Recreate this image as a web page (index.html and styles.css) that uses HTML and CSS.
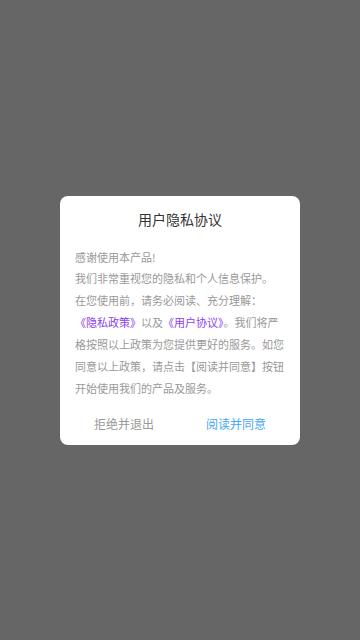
FILE: index.html
```html
<!DOCTYPE html>
<html lang="zh-CN">
<head>
<meta charset="utf-8">
<meta name="viewport" content="width=360, initial-scale=1">
<title>用户隐私协议</title>
<link rel="stylesheet" href="styles.css">
</head>
<body>
<div class="mask">
  <div class="dialog">
    <div class="title">用户隐私协议</div>
    <div class="content">
      <p>感谢使用本产品!</p>
      <p>我们非常重视您的隐私和个人信息保护。</p>
      <p>在您使用前，请务必阅读、充分理解：</p>
      <p><span class="link">《隐私政策》</span>以及<span class="link">《用户协议》</span>。我们将严格按照以上政策为您提供更好的服务。如您同意以上政策，请点击【阅读并同意】按钮开始使用我们的产品及服务。</p>
    </div>
    <div class="actions">
      <div class="btn btn-cancel">拒绝并退出</div>
      <div class="btn btn-ok">阅读并同意</div>
    </div>
  </div>
</div>
</body>
</html>
```
FILE: styles.css
```css
* { box-sizing: border-box; }
html, body {
  margin: 0;
  padding: 0;
  width: 360px;
  height: 640px;
  overflow: hidden;
}
body {
  font-family: "Noto Sans CJK SC", "Noto Sans", sans-serif;
  background: #666666;
}
.mask {
  width: 360px;
  height: 640px;
  display: flex;
  align-items: center;
  justify-content: center;
}
.dialog {
  width: 240px;
  height: 249px;
  background: #ffffff;
  border-radius: 8px;
  display: flex;
  flex-direction: column;
  overflow: hidden;
}
.title {
  height: 46px;
  line-height: 46px;
  text-align: center;
  font-size: 14px;
  color: #333333;
}
.content {
  margin-top: 5px;
  padding: 0 15px;
  font-size: 11px;
  line-height: 21.9px;
  color: #999999;
}
.content p {
  margin: 0;
}
.link {
  color: #8a3ef0;
}
.actions {
  margin-top: auto;
  height: 42px;
  display: flex;
  padding: 0 8px;
}
.btn {
  flex: 1;
  display: flex;
  align-items: center;
  justify-content: center;
  font-size: 12px;
}
.btn-cancel { color: #999999; }
.btn-ok { color: #45a8f3; }
```
